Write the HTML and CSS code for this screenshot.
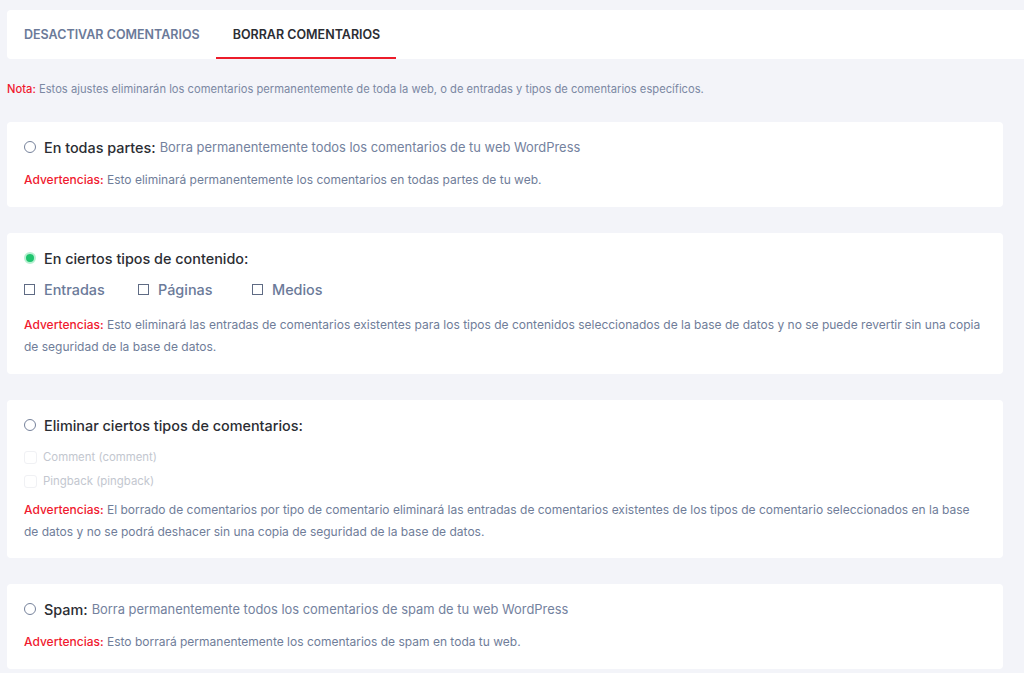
FILE: index.html
```html
<!DOCTYPE html>
<html lang="es">
<head>
<meta charset="utf-8">
<title>Borrar comentarios</title>
<link rel="stylesheet" href="styles.css">
</head>
<body>
<div class="page">
  <nav class="tabs">
    <a class="tab">DESACTIVAR COMENTARIOS</a>
    <a class="tab active">BORRAR COMENTARIOS</a>
  </nav>

  <p class="note"><span class="red">Nota:</span> Estos ajustes eliminarán los comentarios permanentemente de toda la web, o de entradas y tipos de comentarios específicos.</p>

  <div class="cards">
    <section class="card">
      <label class="option"><span class="radio"></span><span class="title">En todas partes:</span> <span class="desc">Borra permanentemente todos los comentarios de tu web WordPress</span></label>
      <p class="warn"><span class="red">Advertencias:</span> Esto eliminará permanentemente los comentarios en todas partes de tu web.</p>
    </section>

    <section class="card card-types">
      <label class="option"><span class="radio checked"></span><span class="title">En ciertos tipos de contenido:</span></label>
      <div class="types">
        <label class="type"><span class="check"></span>Entradas</label>
        <label class="type"><span class="check"></span>Páginas</label>
        <label class="type"><span class="check"></span>Medios</label>
      </div>
      <p class="warn"><span class="red">Advertencias:</span> Esto eliminará las entradas de comentarios existentes para los tipos de contenidos seleccionados de la base de datos y no se puede revertir sin una copia de seguridad de la base de datos.</p>
    </section>

    <section class="card card-ctypes">
      <label class="option"><span class="radio"></span><span class="title">Eliminar ciertos tipos de comentarios:</span></label>
      <div class="ctypes">
        <label class="ctype"><span class="dcheck"></span>Comment (comment)</label>
        <label class="ctype"><span class="dcheck"></span>Pingback (pingback)</label>
      </div>
      <p class="warn"><span class="red">Advertencias:</span> El borrado de comentarios por tipo de comentario eliminará las entradas de comentarios existentes de los tipos de comentario seleccionados en la base de datos y no se podrá deshacer sin una copia de seguridad de la base de datos.</p>
    </section>

    <section class="card">
      <label class="option"><span class="radio"></span><span class="title">Spam:</span> <span class="desc">Borra permanentemente todos los comentarios de spam de tu web WordPress</span></label>
      <p class="warn"><span class="red">Advertencias:</span> Esto borrará permanentemente los comentarios de spam en toda tu web.</p>
    </section>
  </div>
</div>
</body>
</html>
```

FILE: styles.css
```css
* { box-sizing: border-box; }

html, body {
  margin: 0;
  padding: 0;
  background: #f3f4f9;
}

body {
  font-family: "Inter", "Noto Sans", sans-serif;
  color: #6f7d99;
  overflow: hidden;
}

.page {
  padding: 10px 0 0 7px;
}

.tabs {
  display: flex;
  height: 49px;
  background: #ffffff;
  border-radius: 4px 0 0 4px;
}

.tab {
  display: flex;
  align-items: center;
  padding: 2px 16px 0 17px;
  font-size: 12.5px;
  font-weight: 600;
  color: #6b7a99;
  border-bottom: 2px solid transparent;
}

.tab.active {
  color: #2b2d33;
  border-bottom-color: #ec1c2a;
}

.red { color: #f0192f; font-weight: 500; }

.note {
  margin: 0;
  padding-top: 23px;
  font-size: 11.2px;
  line-height: 14px;
  color: #7b88a3;
}

.cards {
  display: flex;
  flex-direction: column;
  gap: 26px;
  width: 996px;
  margin-top: 26px;
}

.card {
  background: #ffffff;
  border-radius: 4px;
  padding: 16px 17px 16px 17px;
}

.option {
  display: flex;
  align-items: center;
  height: 18px;
  white-space: nowrap;
}

.radio {
  width: 12px;
  height: 12px;
  border: 1px solid #76829b;
  border-radius: 50%;
  margin-right: 8px;
  flex: none;
  background: #fff;
}

.radio.checked {
  border: 2px solid #b8f0d2;
  background: #1fc46e;
  box-shadow: inset 0 0 0 1px #1fc46e;
}

.title {
  font-size: 14.4px;
  font-weight: 500;
  color: #2b2d33;
}

.desc {
  font-size: 12.9px;
  color: #74829e;
  margin-left: 4px;
}

.warn {
  margin: 13px 0 0;
  font-size: 12px;
  line-height: 22px;
  color: #6f7d99;
}

.types {
  display: flex;
  margin-top: 12px;
  height: 20px;
  align-items: center;
}

.type {
  display: flex;
  align-items: center;
  font-size: 14.4px;
  font-weight: 500;
  color: #6b7a99;
  width: 114px;
}

.check {
  width: 11px;
  height: 11px;
  border: 1px solid #5f6b84;
  margin-right: 9px;
  flex: none;
}

.ctypes {
  display: flex;
  flex-direction: column;
  margin-top: 11px;
}

.ctype {
  display: flex;
  align-items: center;
  height: 24px;
  font-size: 11.4px;
  color: #c3c7cf;
}

.dcheck {
  width: 13px;
  height: 13px;
  border: 1px solid #f0f1f4;
  border-radius: 3px;
  margin-right: 6px;
  flex: none;
}

.card-types .warn { margin-top: 15px; }
.card-ctypes .warn { margin-top: 6px; }
.card-ctypes { padding-bottom: 15px; }
```
